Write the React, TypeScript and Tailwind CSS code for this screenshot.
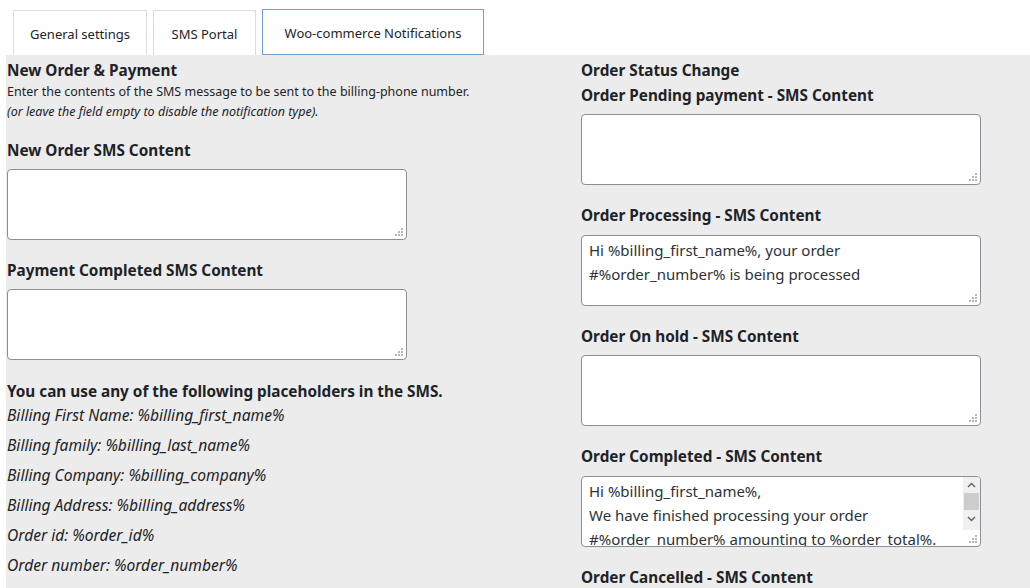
import React from "react";

const font = { fontFamily: '"Noto Sans", "Open Sans", sans-serif' };

function Grip() {
  return (
    <svg width="8" height="8" viewBox="0 0 8 8" className="absolute right-[3px] bottom-[3px]">
      <rect x="6" y="0" width="2" height="2" fill="#b8b8b8" />
      <rect x="3" y="3" width="2" height="2" fill="#b8b8b8" />
      <rect x="6" y="3" width="2" height="2" fill="#b8b8b8" />
      <rect x="0" y="6" width="2" height="2" fill="#b8b8b8" />
      <rect x="3" y="6" width="2" height="2" fill="#b8b8b8" />
      <rect x="6" y="6" width="2" height="2" fill="#b8b8b8" />
    </svg>
  );
}

function Scrollbar() {
  return (
    <div className="absolute right-0 top-0 bottom-0 w-[17px] flex flex-col">
      <div className="flex flex-col bg-[#f0f0f0] h-[53px]">
        <div className="h-[16px] flex items-center justify-center">
          <svg width="9" height="6" viewBox="0 0 9 6">
            <path d="M1 5 L4.5 1.5 L8 5" fill="none" stroke="#606060" strokeWidth="1.4" />
          </svg>
        </div>
        <div className="h-[17px] bg-[#cdcdcd] mx-[1px]" />
        <div className="h-[18px] flex items-center justify-center">
          <svg width="9" height="6" viewBox="0 0 9 6">
            <path d="M1 1 L4.5 4.5 L8 1" fill="none" stroke="#606060" strokeWidth="1.4" />
          </svg>
        </div>
      </div>
    </div>
  );
}

function Area({ lines, scroll, mt = "mt-[9.5px]" }: { lines?: string[]; scroll?: boolean; mt?: string }) {
  return (
    <div className={"relative w-[400px] h-[71px] bg-white border border-[#8c8f94] rounded-[4px] overflow-hidden " + mt}>
      <div className="pt-[2px] pl-[7px] pr-[20px] text-[15px] leading-[24px] text-[#2c3338] whitespace-nowrap">
        {lines?.map((l, i) => (
          <div key={i}>{l}</div>
        ))}
      </div>
      {scroll && <Scrollbar />}
      <Grip />
    </div>
  );
}

function H({ children, className = "" }: { children: React.ReactNode; className?: string }) {
  return (
    <div className={"text-[15.3px] leading-[20px] font-bold text-[#1d2327] " + className}>{children}</div>
  );
}

function Tab({ label, w, active }: { label: string; w: string; active?: boolean }) {
  return (
    <div
      className={
        "flex items-center justify-center pt-[3px] bg-white text-[13px] text-[#1d2327] " +
        w +
        (active
          ? " h-[46px] border border-[#72a0d0]"
          : " h-[45px] border border-b-0 border-[#dcdcde]")
      }
    >
      {label}
    </div>
  );
}

export default function App() {
  return (
    <div className="w-[1030px] h-[588px] overflow-hidden bg-white" style={font}>
      <div className="flex items-end h-[55px] pl-[13px] gap-[6px]">
        <Tab label="General settings" w="w-[134px]" />
        <Tab label="SMS Portal" w="w-[103px]" />
        <Tab label="Woo-commerce Notifications" w="w-[222px]" active />
      </div>
      <div className="ml-[6px] bg-[#ececec] h-[533px] flex pl-[1px] pt-[5px]">
        <div className="w-[574px]">
          <H>New Order &amp; Payment</H>
          <div className="mt-[2px] text-[12.5px] leading-[20px] text-[#1d2327]">
            Enter the contents of the SMS message to be sent to the billing-phone number.
          </div>
          <div className="text-[12.5px] leading-[20px] text-[#1d2327] italic">
            (or leave the field empty to disable the notification type).
          </div>
          <H className="mt-[18px]">New Order SMS Content</H>
          <Area mt="mt-[9px]" />
          <H className="mt-[20px]">Payment Completed SMS Content</H>
          <Area mt="mt-[9px]" />
          <H className="mt-[21px]">You can use any of the following placeholders in the SMS.</H>
          <div className="-mt-[1px] text-[15.6px] leading-[30px] italic text-[#1d2327]">
            <div>Billing First Name: %billing_first_name%</div>
            <div>Billing family: %billing_last_name%</div>
            <div>Billing Company: %billing_company%</div>
            <div>Billing Address: %billing_address%</div>
            <div>Order id: %order_id%</div>
            <div>Order number: %order_number%</div>
          </div>
        </div>
        <div className="w-[420px]">
          <H>Order Status Change</H>
          <H className="mt-[5px]">Order Pending payment - SMS Content</H>
          <Area mt="mt-[9px]" />
          <H className="mt-[20px]">Order Processing - SMS Content</H>
          <Area lines={["Hi %billing_first_name%, your order", "#%order_number% is being processed"]} />
          <H className="mt-[20px]">Order On hold - SMS Content</H>
          <Area mt="mt-[9px]" />
          <H className="mt-[20px]">Order Completed - SMS Content</H>
          <Area
            scroll
            mt="mt-[10px]"
            lines={[
              "Hi %billing_first_name%,",
              "We have finished processing your order",
              "#%order_number% amounting to %order_total%.",
            ]}
          />
          <H className="mt-[20px]">Order Cancelled - SMS Content</H>
        </div>
      </div>
    </div>
  );
}
